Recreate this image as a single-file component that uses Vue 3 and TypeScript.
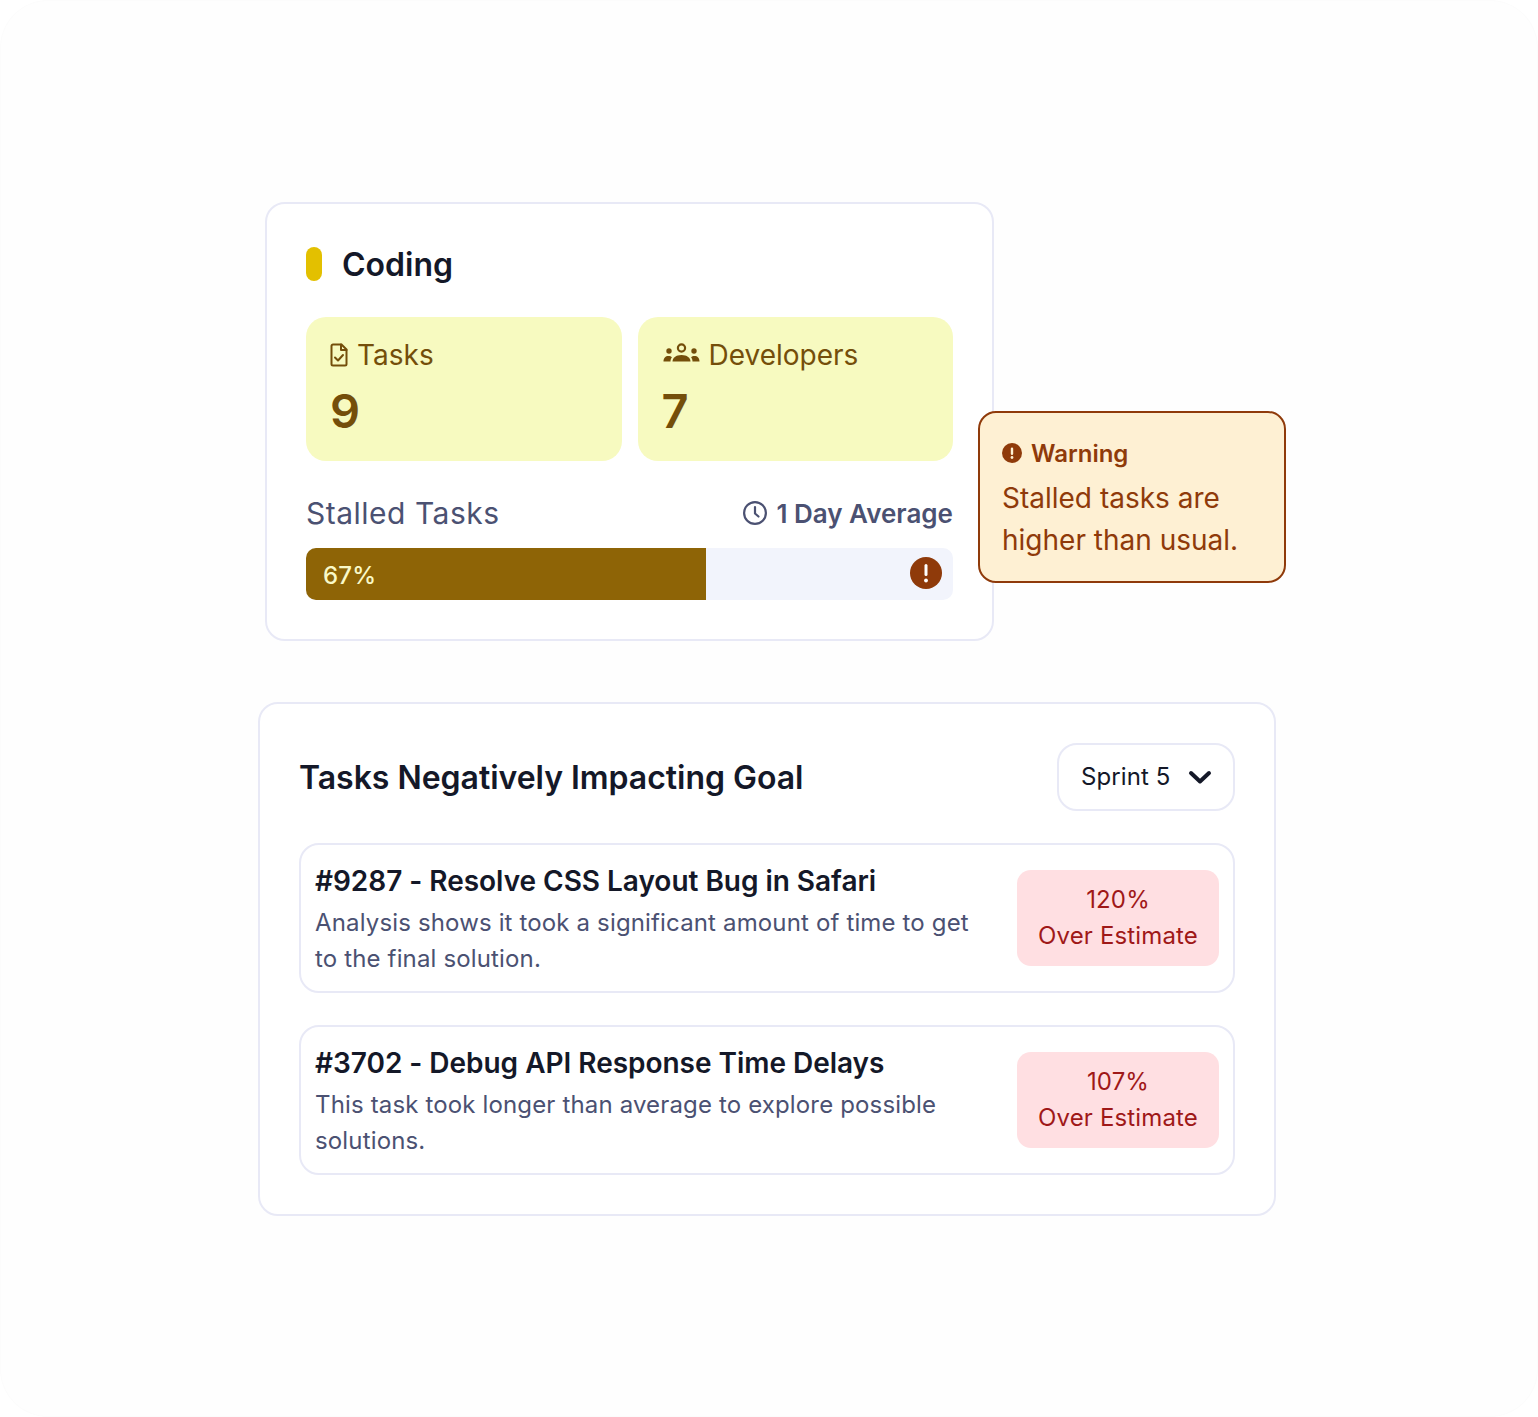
<script setup lang="ts">
interface Item { title: string; text: string; pct: string }
const items: Item[] = [
  { title: '#9287 - Resolve CSS Layout Bug in Safari', text: 'Analysis shows it took a significant amount of time to get to the final solution.', pct: '120%' },
  { title: '#3702 - Debug API Response Time Delays', text: 'This task took longer than average to explore possible solutions.', pct: '107%' },
]
</script>

<template>
  <main class="page">
    <section class="card coding">
      <header class="coding-head">
        <span class="pill"></span>
        <h2>Coding</h2>
      </header>
      <div class="tiles">
        <div class="tile">
          <div class="tile-label">
            <svg class="i-file" viewBox="0 0 18 24" fill="none" stroke="currentColor" stroke-width="2" stroke-linejoin="round" stroke-linecap="round">
              <path d="M1.5 3a1.5 1.5 0 0 1 1.5-1.5h8.5l5 5V21a1.5 1.5 0 0 1-1.5 1.5H3A1.5 1.5 0 0 1 1.5 21z" />
              <path d="M11 1.5V7h5.500" />
              <path d="M5 14.500l3 3 5-5.500" />
            </svg>
            <span>Tasks</span>
          </div>
          <div class="tile-value">9</div>
        </div>
        <div class="tile">
          <div class="tile-label dev">
            <svg class="i-users" viewBox="0 0 36 20" fill="currentColor">
              <circle cx="18" cy="5" r="3.600" fill="none" stroke="currentColor" stroke-width="2.200" />
              <circle cx="5.500" cy="8" r="2.700" />
              <circle cx="30.500" cy="8" r="2.700" />
              <path d="M0 18.500c0-3.500 2-5.500 5-5.500 1.500 0 2.600.4 3.400 1.200-.9 1.200-1.400 2.700-1.400 4.300z" />
              <path d="M36 18.500c0-3.500-2-5.500-5-5.500-1.500 0-2.600.4-3.400 1.200.9 1.200 1.400 2.700 1.400 4.300z" />
              <path d="M9 18.500c0-3.600 3.500-6.500 9-6.500s9 2.900 9 6.500z" />
            </svg>
            <span>Developers</span>
          </div>
          <div class="tile-value">7</div>
        </div>
      </div>
      <div class="stalled-row">
        <span class="stalled">Stalled Tasks</span>
        <span class="avg">
          <svg class="i-clock" viewBox="0 0 24 24" fill="none" stroke="currentColor" stroke-width="2.200" stroke-linecap="round" stroke-linejoin="round">
            <circle cx="12" cy="12" r="10.900" />
            <path d="M12 6v6.500l3.500 3" />
          </svg>
          1 Day Average
        </span>
      </div>
      <div class="track">
        <div class="fill">67%</div>
        <svg class="i-alert" viewBox="0 0 32 32">
          <circle cx="16" cy="16" r="16" fill="#8f3a0a" />
          <rect x="14.500" y="7" width="3" height="12" rx="1.500" fill="#fff" />
          <circle cx="16" cy="23.500" r="1.900" fill="#fff" />
        </svg>
      </div>
      <aside class="warning">
        <div class="warn-head">
          <svg class="i-warn" viewBox="0 0 20 20">
            <circle cx="10" cy="10" r="10" fill="#8f3a0a" />
            <rect x="8.800" y="4.500" width="2.400" height="7.500" rx="1.200" fill="#fef0d3" />
            <circle cx="10" cy="14.500" r="1.400" fill="#fef0d3" />
          </svg>
          <strong>Warning</strong>
        </div>
        <p>Stalled tasks are higher than usual.</p>
      </aside>
    </section>

    <section class="card goal">
      <header class="goal-head">
        <h2>Tasks Negatively Impacting Goal</h2>
        <div class="select">
          <span class="select-label">Sprint 5</span>
          <svg class="i-chev" viewBox="0 0 24 16" fill="none" stroke="currentColor" stroke-width="4" stroke-linecap="round" stroke-linejoin="round">
            <path d="M3 4l9 8.500L21 4" />
          </svg>
        </div>
      </header>
      <div class="list">
        <article v-for="item in items" :key="item.title" class="item">
          <div class="item-body">
            <h3>{{ item.title }}</h3>
            <p>{{ item.text }}</p>
          </div>
          <div class="badge">{{ item.pct }}<br />Over Estimate</div>
        </article>
      </div>
    </section>
  </main>
</template>

<style>
html, body { margin: 0; background: #fff; }
</style>

<style scoped>
* { box-sizing: border-box; }
.page {
  width: 1538px;
  height: 1417px;
  padding-top: 202px;
  background: #fefefe;
  box-shadow: inset 0 0 0 1px #fcfcfc;
  border-radius: 48px;
  font-family: Inter, "Liberation Sans", sans-serif;
  color: #141828;
  display: flex;
  flex-direction: column;
}
h2, h3, p { margin: 0; }
.card {
  background: #fff;
  border: 2px solid #e8e9f6;
  border-radius: 20px;
}
.coding {
  position: relative;
  width: 729px;
  height: 439px;
  margin-left: 265px;
  padding: 43px 39px 0;
}
.coding-head {
  display: flex;
  align-items: center;
  gap: 20px;
  height: 36px;
}
.pill {
  width: 16px;
  height: 34px;
  margin-top: -2px;
  border-radius: 8px;
  background: #e3c000;
}
.coding-head h2 {
  font-size: 32px;
  line-height: 36px;
  font-weight: 600;
}
.tiles {
  display: flex;
  gap: 16px;
  margin-top: 34px;
}
.tile {
  flex: 1;
  height: 144px;
  padding: 21px 24px 0;
  background: #f7fac0;
  border-radius: 20px;
  color: #744e0a;
}
.tile-label {
  display: flex;
  align-items: center;
  gap: 9px;
  height: 34px;
  font-size: 28px;
}
.tile-label.dev { gap: 9px; padding-left: 1px; }
.i-file { width: 18px; height: 24px; }
.i-users { width: 37px; height: 20px; margin-top: -4px; }
.tile-value {
  margin-top: 11px;
  font-size: 47px;
  line-height: 56px;
  font-weight: 600;
}
.stalled-row {
  display: flex;
  justify-content: space-between;
  align-items: center;
  margin-top: 33px;
  height: 38px;
  color: #4b5172;
}
.stalled { font-size: 30px; letter-spacing: 0.5px; }
.avg {
  display: flex;
  align-items: center;
  gap: 9px;
  font-size: 26px;
  font-weight: 600;
}
.i-clock { width: 24px; height: 24px; }
.track {
  position: relative;
  margin-top: 16px;
  height: 52px;
  background: #f2f4fc;
  border-radius: 10px;
  overflow: hidden;
}
.fill {
  width: 400px;
  height: 100%;
  padding-left: 17px;
  background: #8e6406;
  color: #f9f9c8;
  font-size: 24px;
  letter-spacing: 0.2px;
  font-weight: 500;
  line-height: 56px;
}
.i-alert {
  position: absolute;
  right: 11px;
  top: 9px;
  width: 32px;
  height: 32px;
}
.warning {
  position: absolute;
  left: 711px;
  top: 207px;
  width: 308px;
  height: 172px;
  padding: 24px 22px 0;
  background: #fef0d3;
  border: 2px solid #8f3a0a;
  border-radius: 18px;
  color: #8f3a0a;
}
.warn-head {
  display: flex;
  align-items: center;
  gap: 9px;
  height: 32px;
}
.warn-head strong {
  font-size: 24px;
  font-weight: 600;
}
.i-warn { width: 20px; height: 20px; }
.warning p {
  margin-top: 8px;
  font-size: 28px;
  line-height: 42px;
}
.goal {
  width: 1018px;
  height: 514px;
  margin-top: 61px;
  margin-left: 258px;
  padding: 39px 39px 0;
}
.goal-head {
  display: flex;
  justify-content: space-between;
  align-items: center;
}
.goal-head h2 {
  margin-top: 2px;
  font-size: 32px;
  letter-spacing: -0.03px;
  line-height: 40px;
  font-weight: 600;
}
.select {
  display: flex;
  align-items: center;
  gap: 17px;
  width: 178px;
  height: 68px;
  padding-left: 22px;
  border: 2px solid #e8e9f6;
  border-radius: 20px;
  font-size: 24px;
}
.select-label { margin-top: -2px; letter-spacing: 0.1px; }
.i-chev { width: 24px; height: 16px; }
.list {
  display: flex;
  flex-direction: column;
  gap: 32px;
  margin-top: 32px;
}
.item {
  display: flex;
  align-items: center;
  justify-content: space-between;
  height: 150px;
  padding: 0 14px;
  border: 2px solid #e8e9f6;
  border-radius: 20px;
}
.item-body { width: 680px; padding-top: 3px; }
.item h3 {
  font-size: 28px;
  letter-spacing: -0.03px;
  line-height: 38px;
  font-weight: 600;
}
.item p {
  margin-top: 5px;
  font-size: 24px;
  letter-spacing: 0.15px;
  line-height: 36px;
  color: #4b5172;
}
.badge {
  width: 202px;
  height: 96px;
  background: #ffdfe2;
  border-radius: 14px;
  color: #9f1818;
  font-size: 24px;
  letter-spacing: 0.15px;
  line-height: 36px;
  padding-top: 12px;
  text-align: center;
}
</style>
